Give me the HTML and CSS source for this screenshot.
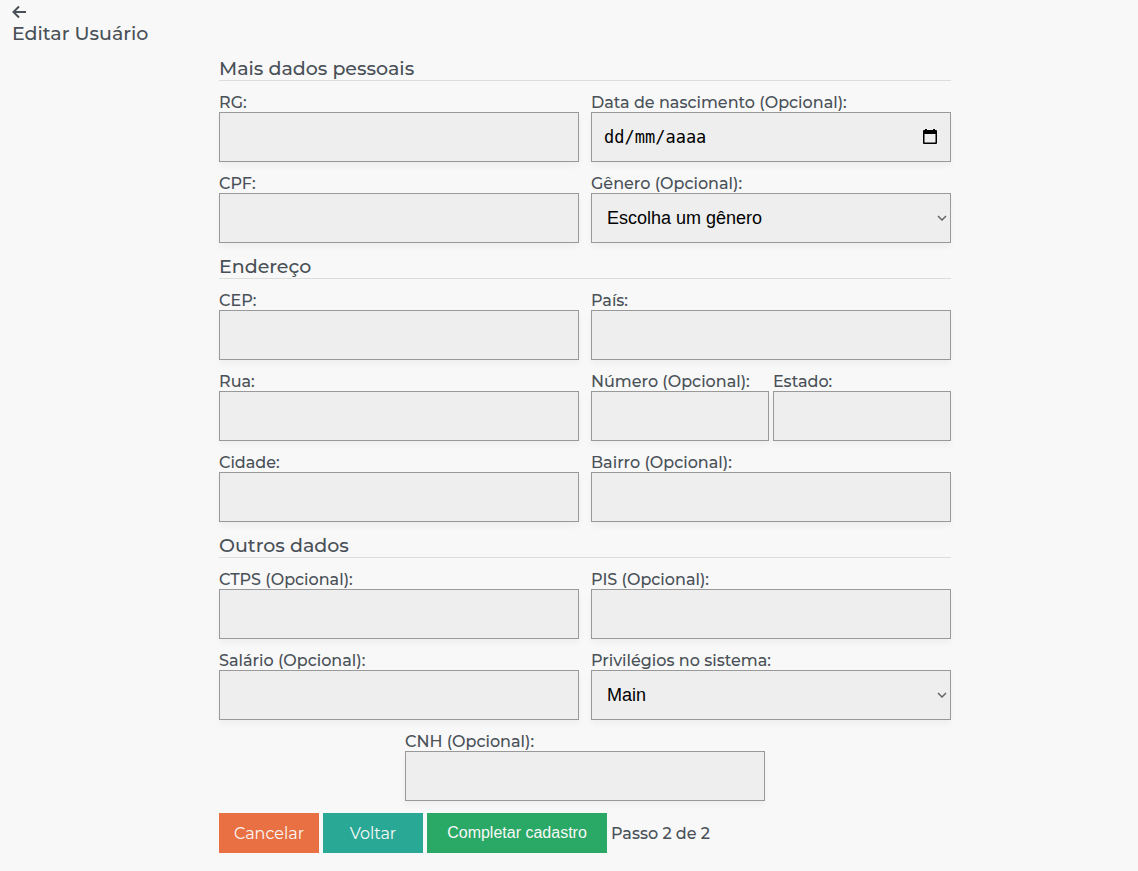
FILE: index.html
```html
<!DOCTYPE html>
<html lang="pt-BR">
<head>
<meta charset="utf-8">
<meta name="viewport" content="width=device-width, initial-scale=1">
<title>Editar Usuário</title>
<link rel="stylesheet" href="styles.css">
</head>
<body>
<header class="page-header">
  <a class="back" href="#" aria-label="Retornar"><svg width="16" height="14" viewBox="0 0 16 14" fill="none" stroke="currentColor" stroke-width="2"><path d="M14 7H2M7 1.5 1.5 7 7 12.500"/></svg></a>
  <h1 class="page-title">Editar Usuário</h1>
</header>
<main class="content">
  <form class="form">
    <h2 class="section">Mais dados pessoais</h2>
    <div class="field"><label for="rg">RG:</label><input class="control" id="rg" type="text"></div>
    <div class="field">
      <label for="nascimento">Data de nascimento (Opcional):</label>
      <div class="control date">
        <input class="date-text" id="nascimento" type="text" placeholder="dd/mm/aaaa">
        <button class="date-button" type="button" aria-label="Abrir calendário"><svg width="16" height="18" viewBox="0 0 16 18"><path fill="currentColor" fill-rule="evenodd" d="M3 1h2v1h6V1h2v1h1q1 0 1 1v12q0 1-1 1H2q-1 0-1-1V3q0-1 1-1h1zM2.500 6v8.500h11V6z"/></svg></button>
      </div>
    </div>
    <div class="field"><label for="cpf">CPF:</label><input class="control" id="cpf" type="text"></div>
    <div class="field"><label for="genero">Gênero (Opcional):</label>
      <div class="select"><select class="control" id="genero"><option>Escolha um gênero</option></select><svg class="chevron" width="10" height="6" viewBox="0 0 10 6" fill="none" stroke="currentColor" stroke-width="1.500"><path d="m1 1 4 4 4-4"/></svg></div>
    </div>

    <h2 class="section">Endereço</h2>
    <div class="field"><label for="cep">CEP:</label><input class="control" id="cep" type="text"></div>
    <div class="field"><label for="pais">País:</label><input class="control" id="pais" type="text"></div>
    <div class="field"><label for="rua">Rua:</label><input class="control" id="rua" type="text"></div>
    <div class="pair">
      <div class="field"><label for="numero">Número (Opcional):</label><input class="control" id="numero" type="text"></div>
      <div class="field"><label for="estado">Estado:</label><input class="control" id="estado" type="text"></div>
    </div>
    <div class="field"><label for="cidade">Cidade:</label><input class="control" id="cidade" type="text"></div>
    <div class="field"><label for="bairro">Bairro (Opcional):</label><input class="control" id="bairro" type="text"></div>

    <h2 class="section">Outros dados</h2>
    <div class="field"><label for="ctps">CTPS (Opcional):</label><input class="control" id="ctps" type="text"></div>
    <div class="field"><label for="pis">PIS (Opcional):</label><input class="control" id="pis" type="text"></div>
    <div class="field"><label for="salario">Salário (Opcional):</label><input class="control" id="salario" type="text"></div>
    <div class="field"><label for="privilegios">Privilégios no sistema:</label>
      <div class="select"><select class="control" id="privilegios"><option>Main</option></select><svg class="chevron" width="10" height="6" viewBox="0 0 10 6" fill="none" stroke="currentColor" stroke-width="1.500"><path d="m1 1 4 4 4-4"/></svg></div>
    </div>
    <div class="field centered"><label for="cnh">CNH (Opcional):</label><input class="control" id="cnh" type="text"></div>

    <div class="actions">
      <button class="button cancel" type="button">Cancelar</button>
      <button class="button previous" type="button">Voltar</button>
      <button class="button submit" type="submit">Completar cadastro</button>
      <span class="step">Passo 2 de 2</span>
    </div>
  </form>
</main>
</body>
</html>
```

FILE: styles.css
```css
* {
  box-sizing: border-box;
}

body {
  margin: 0;
  background: #f8f8f8;
  color: #495057;
  font: 500 16px/19px Montserrat, Inter, sans-serif;
}

.page-header {
  padding: 5px 12px 0;
}

.back {
  display: flex;
  width: 16px;
  color: inherit;
}

.page-title,
.section {
  margin: 0;
  font-size: 19px;
  font-weight: 500;
  line-height: 23px;
}

.page-title {
  padding-top: 3px;
}

.content {
  padding: 12px 0 18px 32px;
}

.form {
  display: grid;
  grid-template-columns: 1fr 1fr;
  gap: 12px;
  max-width: 732px;
  margin: 0 auto;
}

.section {
  grid-column: 1 / -1;
  border-bottom: 1px solid #dcdcdc;
}

.field {
  display: flex;
  flex-direction: column;
  min-width: 0;
}

.centered {
  grid-column: 1 / -1;
  justify-self: center;
  width: calc(50% - 6px);
}

.pair {
  display: grid;
  grid-template-columns: 1fr 1fr;
  gap: 4px;
}

.control {
  width: 100%;
  height: 50px;
  padding: 0 12px;
  border: 1px solid #999;
  border-radius: 0;
  background: #eee;
  box-shadow: 0 4px 6px rgba(0, 0, 0, 0.04);
  color: #000;
  font: 18px "Liberation Sans", Arial, sans-serif;
}

.date {
  display: flex;
  align-items: center;
}

.date-text {
  flex: 1;
  min-width: 0;
  padding: 0;
  border: 0;
  background: transparent;
  color: #000;
  font: 17px "DejaVu Sans Mono", monospace;
}

.date-text::placeholder {
  color: #000;
  opacity: 1;
}

.date-button {
  display: flex;
  padding: 0;
  border: 0;
  background: transparent;
  color: #000;
}

.select {
  display: grid;
  align-items: center;
}

.select > * {
  grid-area: 1 / 1;
}

.select .control {
  appearance: none;
  padding: 0 15px;
}

.chevron {
  justify-self: end;
  margin-right: 4px;
  color: #666;
  pointer-events: none;
}

.actions {
  display: flex;
  grid-column: 1 / -1;
  align-items: center;
  gap: 4px;
}

.button {
  width: 100px;
  height: 40px;
  padding: 0;
  border: 0;
  color: #f8f8f8;
  font: 400 16px Montserrat, Inter, sans-serif;
}

.cancel {
  background: #e97042;
}

.previous {
  background: #2aa896;
}

.submit {
  width: 180px;
  background: #2aa865;
  font-family: "Liberation Sans", Arial, sans-serif;
}
```
